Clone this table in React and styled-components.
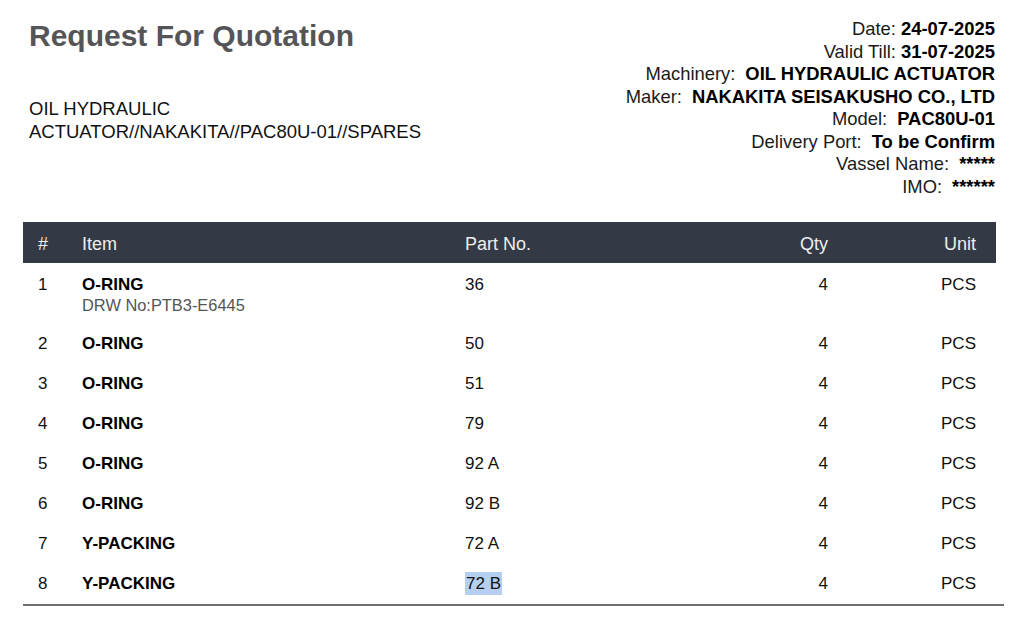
import React from 'react';
import styled, { createGlobalStyle } from 'styled-components';

const GlobalStyle = createGlobalStyle`
  html, body {
    margin: 0;
    padding: 0;
    background: #ffffff;
  }
  body {
    font-family: "Liberation Sans", Arial, Helvetica, sans-serif;
    color: #111;
  }
`;

const Page = styled.div`
  width: 973px;
  margin-left: 23px;
  padding-top: 18px;
`;

const Header = styled.div`
  display: flex;
  justify-content: space-between;
  align-items: flex-start;
  padding-left: 6px;
  padding-right: 1px;
`;

const LeftCol = styled.div`
  display: flex;
  flex-direction: column;
`;

const Title = styled.h1`
  margin: 0;
  font-size: 30px;
  line-height: 35px;
  font-weight: 700;
  color: #555557;
`;

const Subject = styled.div`
  margin-top: 44px;
  max-width: 430px;
  font-size: 18.5px;
  line-height: 23px;
  color: #111;
`;

const Meta = styled.div`
  text-align: right;
  font-size: 18.4px;
  line-height: 22.5px;
  color: #1a1a1a;
`;

const MetaLine = styled.div`
  white-space: nowrap;
`;

const Value = styled.b`
  font-weight: 700;
  color: #000;
  margin-left: ${(p) => (p.$wide ? '10px' : '5px')};
`;

const Table = styled.div`
  margin-top: 24px;
  width: 981px;
  border-bottom: 2px solid #6f6f6f;
`;

const Row = styled.div`
  display: grid;
  grid-template-columns: 44px 383px 1fr 120px 148px;
  align-items: start;
  width: 973px;
  box-sizing: border-box;
  padding: 0 20px 0 15px;
`;

const HeadRow = styled(Row)`
  height: 41px;
  padding-top: 4px;
  align-items: center;
  background: #343a45;
  color: #eceef0;
  font-size: 18px;
`;

const BodyRow = styled(Row)`
  padding-top: ${(p) => (p.$first ? '12px' : '10px')};
  padding-bottom: ${(p) => (p.$first ? '8px' : '10px')};
  font-size: 17px;
  line-height: 20px;
  color: #111;
`;

const Cell = styled.div`
  text-align: ${(p) => (p.$right ? 'right' : 'left')};
`;

const ItemName = styled.div`
  font-weight: 700;
  color: #000;
`;

const ItemNote = styled.div`
  font-size: 16.4px;
  line-height: 21px;
  color: #555;
`;

const Selected = styled.span`
  background: #b4cfef;
  padding: 2px 1px;
`;

const items = [
  { no: 1, name: 'O-RING', note: 'DRW No:PTB3-E6445', part: '36', qty: 4, unit: 'PCS' },
  { no: 2, name: 'O-RING', part: '50', qty: 4, unit: 'PCS' },
  { no: 3, name: 'O-RING', part: '51', qty: 4, unit: 'PCS' },
  { no: 4, name: 'O-RING', part: '79', qty: 4, unit: 'PCS' },
  { no: 5, name: 'O-RING', part: '92 A', qty: 4, unit: 'PCS' },
  { no: 6, name: 'O-RING', part: '92 B', qty: 4, unit: 'PCS' },
  { no: 7, name: 'Y-PACKING', part: '72 A', qty: 4, unit: 'PCS' },
  { no: 8, name: 'Y-PACKING', part: '72 B', qty: 4, unit: 'PCS', selected: true },
];

const meta = [
  { label: 'Date:', value: '24-07-2025' },
  { label: 'Valid Till:', value: '31-07-2025' },
  { label: 'Machinery:', value: 'OIL HYDRAULIC ACTUATOR', wide: true },
  { label: 'Maker:', value: 'NAKAKITA SEISAKUSHO CO., LTD', wide: true },
  { label: 'Model:', value: 'PAC80U-01', wide: true },
  { label: 'Delivery Port:', value: 'To be Confirm', wide: true },
  { label: 'Vassel Name:', value: '*****', wide: true },
  { label: 'IMO:', value: '******', wide: true },
];

const App = () => {
  return (
    <>
      <GlobalStyle />
      <Page>
        <Header>
          <LeftCol>
            <Title>Request For Quotation</Title>
            <Subject>OIL HYDRAULIC ACTUATOR//NAKAKITA//PAC80U-01//SPARES</Subject>
          </LeftCol>
          <Meta>
            {meta.map((m) => (
              <MetaLine key={m.label}>
                {m.label}
                <Value $wide={m.wide}>{m.value}</Value>
              </MetaLine>
            ))}
          </Meta>
        </Header>

        <Table>
          <HeadRow>
            <Cell>#</Cell>
            <Cell>Item</Cell>
            <Cell>Part No.</Cell>
            <Cell $right>Qty</Cell>
            <Cell $right>Unit</Cell>
          </HeadRow>
          {items.map((it, i) => (
            <BodyRow key={it.no} $first={i === 0}>
              <Cell>{it.no}</Cell>
              <Cell>
                <ItemName>{it.name}</ItemName>
                {it.note && <ItemNote>{it.note}</ItemNote>}
              </Cell>
              <Cell>{it.selected ? <Selected>{it.part}</Selected> : it.part}</Cell>
              <Cell $right>{it.qty}</Cell>
              <Cell $right>{it.unit}</Cell>
            </BodyRow>
          ))}
        </Table>
      </Page>
    </>
  );
};

export default App;
